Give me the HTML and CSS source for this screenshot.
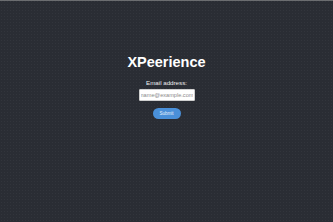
FILE: index.html
```html
<!DOCTYPE html>
<html>
<head>
<meta charset="utf-8">
<link rel="stylesheet" href="styles.css">
</head>
<body>
<div class="topline"></div>
<main class="page">
  <h1 class="title">XPeerience</h1>
  <form class="form">
    <label class="label" for="email">Email address:</label>
    <input class="input" id="email" type="email" placeholder="name@example.com">
    <button class="submit" type="button">Submit</button>
  </form>
</main>
</body>
</html>
```
FILE: styles.css
```css
html, body {
  margin: 0;
  padding: 0;
  height: 100%;
}
body {
  background-color: #2a2d34;
  background-image: radial-gradient(rgba(255,255,255,0.04) 0.6px, transparent 0.8px);
  background-size: 3px 3px;
  font-family: "Liberation Sans", Arial, sans-serif;
  color: #ffffff;
}
.topline {
  height: 1px;
  background: #6b6d70;
}
.page {
  display: flex;
  flex-direction: column;
  align-items: center;
  padding-top: 52px;
}
.title {
  margin: 0;
  font-size: 14.5px;
  font-weight: bold;
  line-height: 18px;
}
.form {
  margin-top: 8px;
  display: flex;
  flex-direction: column;
  align-items: center;
}
.label {
  font-size: 6.2px;
  line-height: 8px;
  color: #f0f0f0;
}
.input {
  margin-top: 2px;
  width: 56px;
  height: 12px;
  box-sizing: border-box;
  border: 1px solid #cfcfcf;
  border-radius: 1px;
  padding: 0 1px;
  font-family: "Liberation Sans", Arial, sans-serif;
  font-size: 5.6px;
  background: #fff;
  outline: none;
}
.input::placeholder {
  color: #8a8a8a;
}
.submit {
  margin-top: 7px;
  width: 28px;
  height: 11px;
  border: none;
  border-radius: 6px;
  background: #4a90d9;
  color: #e8f1fb;
  font-family: "Liberation Sans", Arial, sans-serif;
  font-size: 4.5px;
  padding: 0;
}
```
